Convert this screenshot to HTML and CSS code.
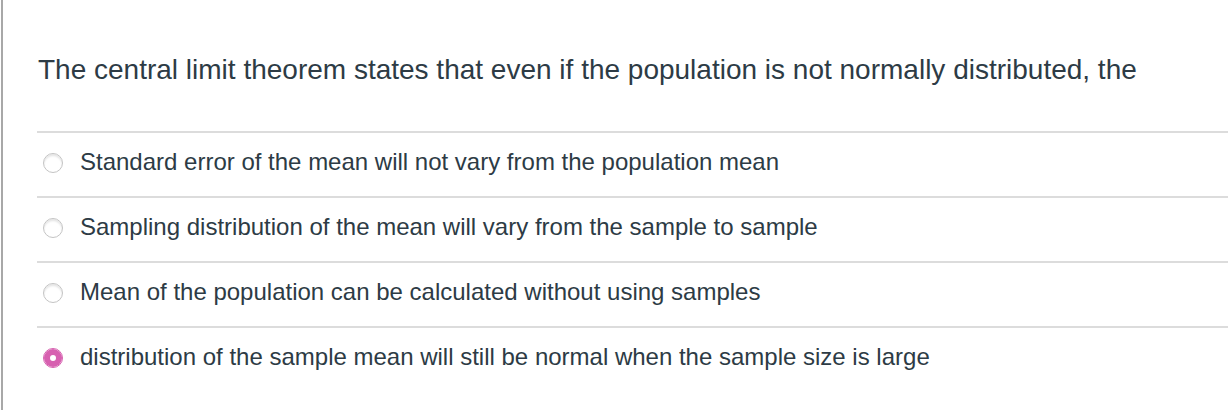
FILE: index.html
```html
<!DOCTYPE html>
<html>
<head>
    <meta charset="utf-8">
    <link rel="stylesheet" href="styles.css">
</head>
<body>
<div class="quiz-frame">
    <div class="question">
        <p class="question-text">The central limit theorem states that even if the population is not normally distributed, the</p>

        <div class="answers">
            <label class="answer">
                <input class="answer-input" type="radio" name="q1">
                <span class="answer-radio"></span>
                <span class="answer-label">Standard error of the mean will not vary from the population mean</span>
            </label>
            <label class="answer">
                <input class="answer-input" type="radio" name="q1">
                <span class="answer-radio"></span>
                <span class="answer-label">Sampling distribution of the mean will vary from the sample to sample</span>
            </label>
            <label class="answer">
                <input class="answer-input" type="radio" name="q1">
                <span class="answer-radio"></span>
                <span class="answer-label">Mean of the population can be calculated without using samples</span>
            </label>
            <label class="answer">
                <input class="answer-input" type="radio" name="q1" checked>
                <span class="answer-radio"></span>
                <span class="answer-label">distribution of the sample mean will still be normal when the sample size is large</span>
            </label>
        </div>
    </div>
</div>
</body>
</html>
```

FILE: styles.css
```css
/* Page */
html, body {
    margin: 0;
    padding: 0;
    background: #fff;
}

body {
    font-family: "Liberation Sans", Arial, Helvetica, sans-serif;
    color: #2d3b45;
}

/* Outer frame with the grey rule on the left */
.quiz-frame {
    margin-left: 1px;
    border-left: 2px solid #a8a8a8;
    min-height: 410px;
    box-sizing: border-box;
}

.question {
    padding-left: 34px;
}

.question-text {
    margin: 0;
    padding: 53px 0 44px 1px;
    font-size: 28px;
    line-height: 34px;
}

/* Answer list */
.answer {
    display: flex;
    align-items: center;
    gap: 17px;
    height: 63px;
    box-sizing: content-box;
    padding: 0 0 0 6px;
    border-top: 2px solid #dcdcdc;
    cursor: pointer;
}

.answer-input {
    position: absolute;
    opacity: 0;
    pointer-events: none;
}

.answer-radio {
    flex: none;
    width: 18px;
    height: 18px;
    margin-top: -4px;
    border-radius: 50%;
    border: 1px solid #c4c4c4;
    box-shadow: inset 0 2px 2px rgba(0, 0, 0, 0.1);
    background: #fff;
}

.answer-input:checked + .answer-radio {
    border-color: #d760b0;
    background: #fff;
    box-shadow: inset 0 0 0 6px #d760b0;
}

.answer-label {
    margin-top: -5px;
    font-size: 24px;
    line-height: 28px;
}
```
